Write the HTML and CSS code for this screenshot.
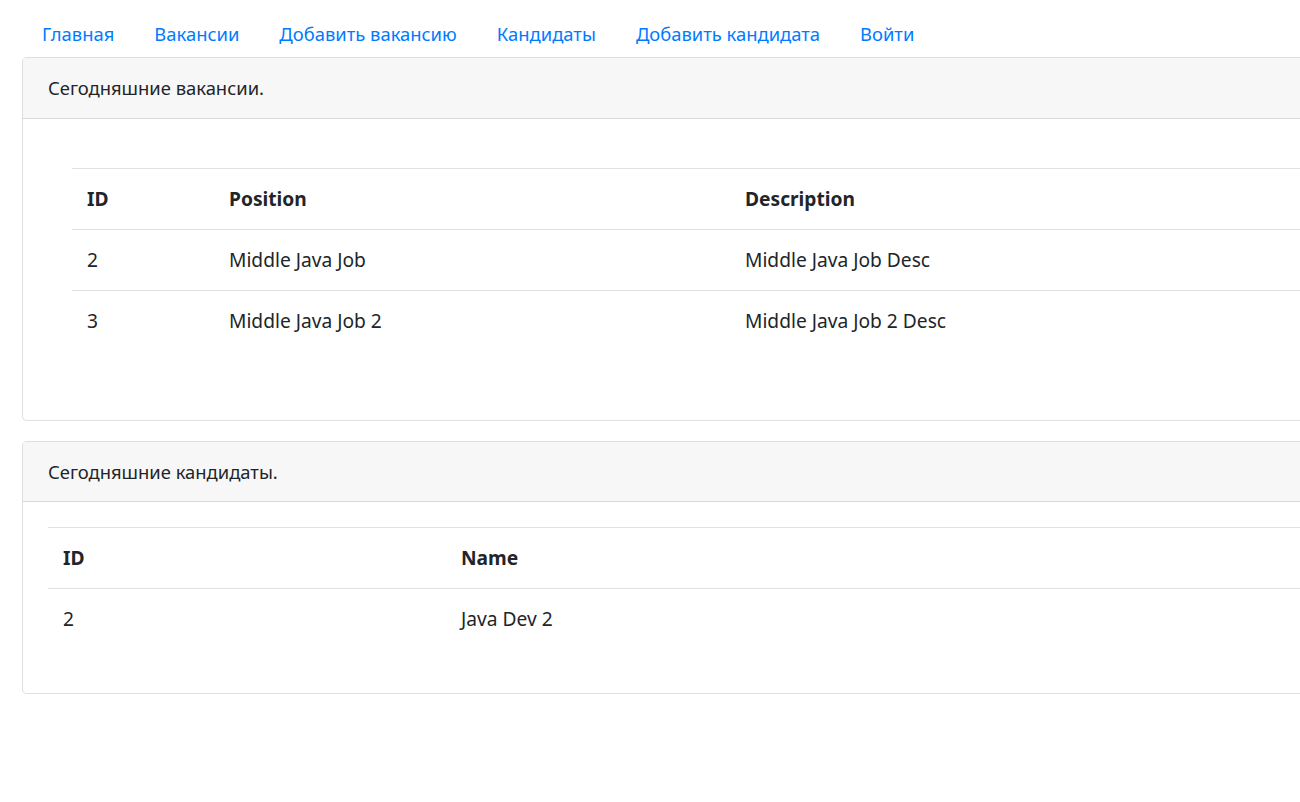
FILE: index.html
```html
<!DOCTYPE html>
<html lang="ru">
<head>
<meta charset="utf-8">
<title>Работа мечты</title>
<link rel="stylesheet" href="styles.css">
</head>
<body>
<div class="container">
  <ul class="nav">
    <li><a class="nav-link" href="#">Главная</a></li>
    <li><a class="nav-link" href="#">Вакансии</a></li>
    <li><a class="nav-link" href="#">Добавить вакансию</a></li>
    <li><a class="nav-link" href="#">Кандидаты</a></li>
    <li><a class="nav-link" href="#">Добавить кандидата</a></li>
    <li><a class="nav-link" href="#">Войти</a></li>
  </ul>

  <div class="card">
    <div class="card-header">Сегодняшние вакансии.</div>
    <div class="card-body">
      <div class="inner">
        <table class="table table-posts">
          <tr><th class="c-id">ID</th><th class="c-pos">Position</th><th>Description</th></tr>
          <tr><td>2</td><td>Middle Java Job</td><td>Middle Java Job Desc</td></tr>
          <tr><td>3</td><td>Middle Java Job 2</td><td>Middle Java Job 2 Desc</td></tr>
        </table>
      </div>
    </div>
  </div>

  <div class="card card-cands">
    <div class="card-header">Сегодняшние кандидаты.</div>
    <div class="card-body">
      <table class="table table-cands">
        <tr><th class="c-id2">ID</th><th>Name</th></tr>
        <tr><td>2</td><td>Java Dev 2</td></tr>
      </table>
    </div>
  </div>
</div>
</body>
</html>
```

FILE: styles.css
```css
* { box-sizing: border-box; }
html, body { margin: 0; padding: 0; overflow: hidden; background: #fff; }
body {
  font-family: "Noto Sans", "Open Sans", sans-serif;
  font-size: 18.4px;
  line-height: 30px;
  color: #212529;
}
.container {
  width: 1600px;
  padding: 7px 0 0 22px;
}
.nav {
  display: flex;
  list-style: none;
  margin: 0;
  padding: 0;
}
.nav-link {
  display: block;
  padding: 12px 20px 8px;
  color: #007bff;
  text-decoration: none;
}
.card {
  width: 1500px;
  border: 1px solid rgba(0,0,0,.125);
  border-radius: 5px;
  margin-bottom: 20px;
  background: #fff;
}
.card-header {
  padding: 15px 25px;
  background: #f7f7f7;
  border-bottom: 1px solid rgba(0,0,0,.125);
  border-radius: 4px 4px 0 0;
}
.card-cands .card-header { padding-bottom: 14px; }
.card-body { padding: 25px; }
.inner { padding: 24px; }
.table {
  width: 100%;
  border-collapse: collapse;
  margin-bottom: 20px;
  font-size: 19.2px;
}
.table-cands { margin-bottom: 19px; }
.table th, .table td {
  padding: 15px;
  text-align: left;
  vertical-align: top;
  border-top: 1px solid #dee2e6;
}
.table th { font-weight: 700; }
.c-id { width: 142px; }
.c-pos { width: 516px; }
.c-id2 { width: 398px; }
```
